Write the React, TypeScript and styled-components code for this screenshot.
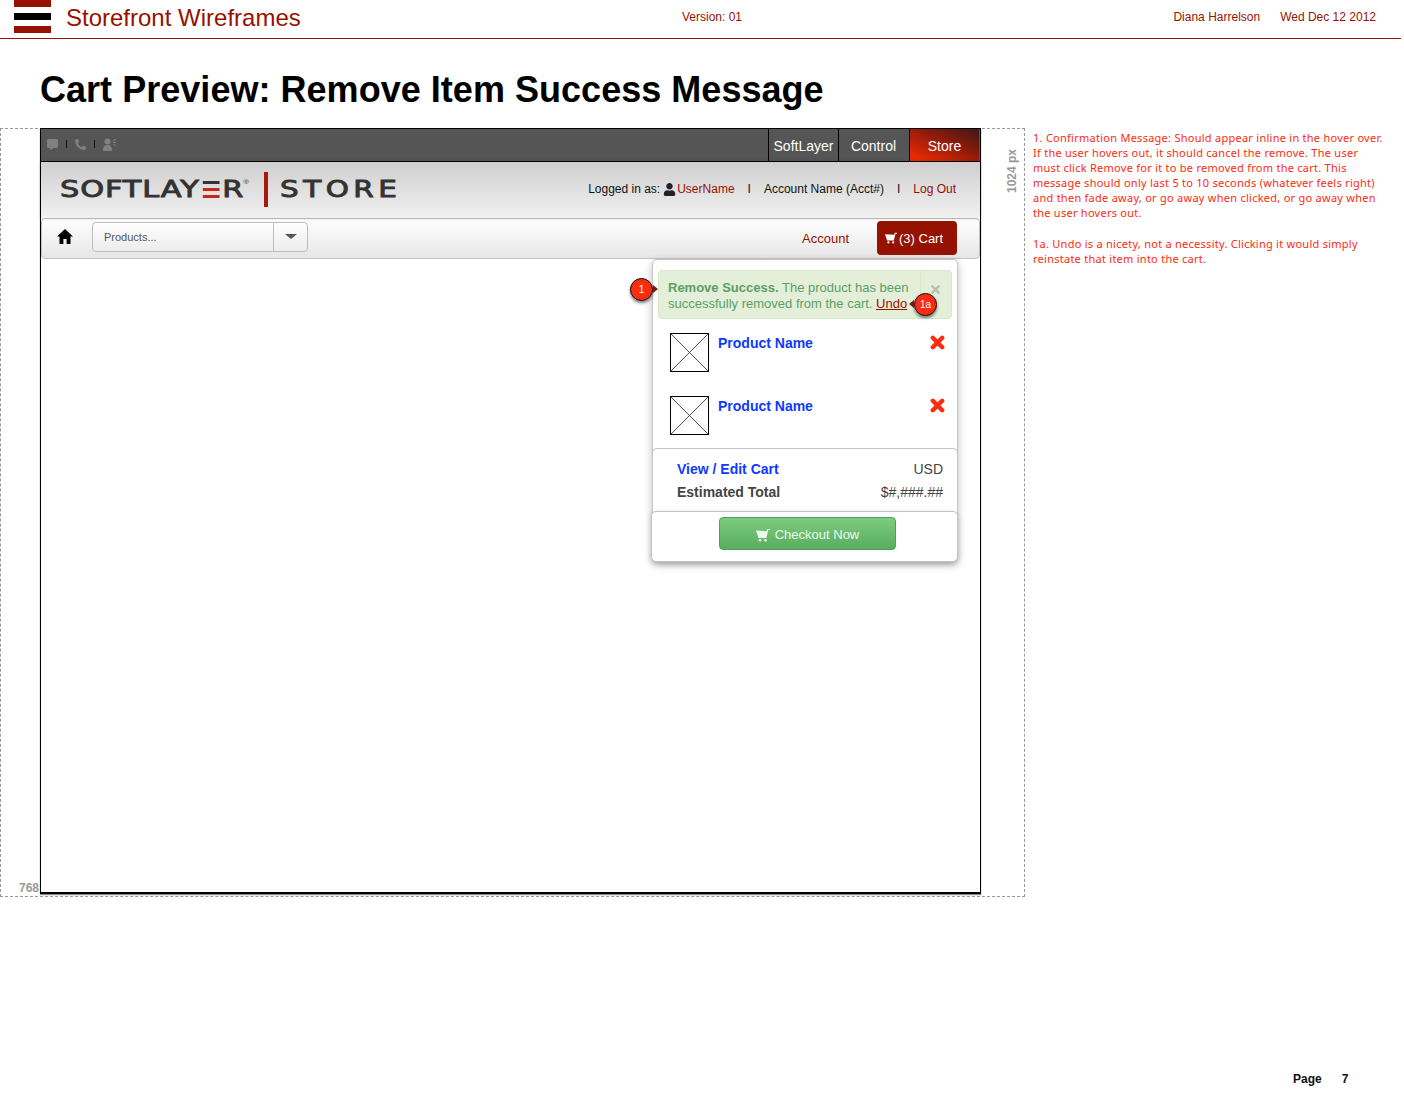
import styled, { createGlobalStyle } from "styled-components";
import { FaCommentAlt, FaPhone, FaTimes, FaUser } from "react-icons/fa";

const red = "#961200";
const blue = "#0f39ff";
const sans = `"Liberation Sans", Arial, sans-serif`;

const GlobalStyle = createGlobalStyle`
  html, body {
    margin: 0;
    padding: 0;
    background: #fff;
    font-family: ${sans};
    color: #000;
  }
  * { box-sizing: border-box; }
`;

const Page = styled.div`
  width: 1404px;
  height: 1093px;
  overflow: hidden;
`;

const SheetHeader = styled.header`
  width: 1401px;
  height: 39px;
  display: flex;
  align-items: flex-start;
  padding-left: 14px;
  border-bottom: 1px solid ${red};
`;

const SheetBrand = styled.div`
  flex: 0 0 668px;
  display: flex;
  align-items: flex-start;
  gap: 15px;
`;

const SheetTitle = styled.div`
  color: ${red};
  font-size: 24px;
  line-height: 36px;
`;

const SheetMeta = styled.div`
  font-size: 12px;
  line-height: 34px;
  color: ${red};
`;

const SheetRight = styled.div`
  margin-left: auto;
  padding-right: 25px;
  display: flex;
  gap: 20px;
`;

const PageTitle = styled.h1`
  margin: 0;
  padding: 28px 0 0 40px;
  height: 89px;
  font-size: 36px;
  line-height: 46px;
  font-weight: 700;
  letter-spacing: 0.03px;
`;

const Board = styled.div`
  display: flex;
  align-items: flex-start;
`;

const Viewport = styled.div`
  position: relative;
  flex: 0 0 1025px;
  height: 769px;
  border: 1px dashed #999;
  padding-left: 39px;
`;

const SizeLabel = styled.div`
  position: absolute;
  font-size: 12px;
  font-weight: 700;
  color: #999;
  white-space: nowrap;
`;

const WidthLabel = styled(SizeLabel)`
  right: 5px;
  top: 20px;
  writing-mode: vertical-rl;
  transform: rotate(180deg);
`;

const HeightLabel = styled(SizeLabel)`
  left: 18px;
  bottom: 1px;
`;

const Screen = styled.div`
  position: relative;
  width: 941px;
  height: 766px;
  margin-top: -1px;
  background: #fff;
  border: 1px solid #000;
  border-bottom-width: 2px;
  box-shadow: 0 1px 1px #888;
`;

const TopBar = styled.div`
  height: 33px;
  display: flex;
  justify-content: space-between;
  background: #555;
  border-bottom: 1px solid #000;
`;

const Utilities = styled.div`
  display: flex;
  align-items: center;
  gap: 8px;
  padding: 0 0 2px 6px;
  color: #808080;
  font-size: 11px;
`;

const UtilDivider = styled.span`
  width: 1px;
  height: 8px;
  background: #111;
`;

const Tabs = styled.div`
  display: flex;
  padding-right: 1px;
`;

const Tab = styled.div<{ $active?: boolean }>`
  width: 70px;
  margin-left: ${(p) => (p.$active ? 1 : 0)}px;
  border-left: 1px solid #000;
  display: flex;
  align-items: center;
  justify-content: center;
  padding-top: 2px;
  color: #fff;
  font-size: 14px;
  background: ${(p) =>
    p.$active ? "linear-gradient(to top right, #e72a06 10%, #8a1a0a 60%, #3d1a18)" : "#555"};
`;

const LogoBar = styled.div`
  position: relative;
  height: 56px;
  display: flex;
  align-items: center;
  justify-content: space-between;
  padding: 0 24px 2px 19px;
  background: linear-gradient(#cfcfcf, #f1f1f1);
  box-shadow: 0 0 4px rgba(0, 0, 0, 0.18);
`;

const Logo = styled.div`
  display: flex;
  align-items: center;
`;

const LogoWord = styled.span<{ $width: number; $scale: number }>`
  flex: 0 0 ${(p) => p.$width}px;
  display: flex;
  align-items: center;
  height: 20px;
  font-family: "DejaVu Sans", sans-serif;
  font-size: 23px;
  color: #333;
  -webkit-text-stroke: 0.9px #333;
  white-space: nowrap;
  transform: scaleX(${(p) => p.$scale});
  transform-origin: left center;
`;

const LogoText = styled.span<{ $spacing: number }>`
  letter-spacing: ${(p) => p.$spacing}px;
`;

const Reg = styled.span`
  align-self: flex-start;
  font-family: ${sans};
  font-size: 6px;
  -webkit-text-stroke: 0;
`;

const LogoDivider = styled.span`
  width: 4px;
  height: 35px;
  margin: 0 12px 0 17px;
  background: #a8180c;
`;

const Session = styled.div`
  display: flex;
  align-items: center;
  font-size: 12px;
  color: #111;
`;

const SessionLink = styled.span`
  color: ${red};
`;

const SessionSep = styled.span`
  margin: 0 13px;
`;

const UserIcon = styled(FaUser)`
  margin: 0 1px 0 3px;
  font-size: 13px;
  color: #222;
`;

const NavBar = styled.div`
  height: 41px;
  display: flex;
  align-items: center;
  padding: 0 22px 2px 15px;
  border: 1px solid #c4c4c4;
  border-radius: 4px;
  background: linear-gradient(#fff, #e6e6e6);
`;

const HomeGlyph = styled.svg`
  width: 16px;
  height: 15px;
  margin-top: -2px;
  flex: none;
`;

const Select = styled.div`
  width: 216px;
  height: 30px;
  margin: -2px 0 0 19px;
  display: flex;
  border: 1px solid #bdbdbd;
  border-radius: 4px;
  background: linear-gradient(#fff, #ececec);
  font-size: 11px;
  color: #555;
`;

const SelectValue = styled.div`
  flex: 1;
  display: flex;
  align-items: center;
  padding-left: 11px;
`;

const SelectArrow = styled.div`
  width: 34px;
  display: flex;
  align-items: center;
  justify-content: center;
  border-left: 1px solid #bdbdbd;
  &::after {
    content: "";
    border: 6px solid transparent;
    border-top: 5px solid #555;
    border-bottom: 0;
  }
`;

const AccountLink = styled.div`
  margin: 2px 0 0 auto;
  font-size: 13px;
  color: ${red};
`;

const CartButton = styled.div`
  width: 80px;
  height: 34px;
  margin-left: 28px;
  padding: 1px 0 0 8px;
  display: flex;
  align-items: center;
  gap: 2px;
  border-radius: 4px;
  background: ${red};
  color: #fff;
  font-size: 13px;
`;

const Popover = styled.div`
  position: absolute;
  left: 611px;
  top: 130px;
  width: 306px;
  height: 303px;
  background: #fff;
  border: 1px solid #c4c4c4;
  border-radius: 5px;
  box-shadow: 0 3px 8px rgba(0, 0, 0, 0.25);
`;

const Alert = styled.div`
  position: relative;
  margin: 10px 5px 0;
  height: 49px;
  padding: 9px 0 0 9px;
  background: #e3efd9;
  border: 1px solid #d8e8cb;
  border-radius: 4px;
  color: #5c9e66;
  font-size: 13px;
  line-height: 16px;
  white-space: nowrap;
`;

const AlertClose = styled.div`
  position: absolute;
  right: 0;
  top: 0;
  bottom: 0;
  width: 31px;
  border-left: 1px solid #d8e8cb;
  display: flex;
  justify-content: center;
  padding: 12px 2px 0 0;
  color: #b9bfb4;
  font-size: 13px;
`;

const Undo = styled.span`
  color: ${red};
  text-decoration: underline;
`;

const Badge = styled.div<{ $side: "left" | "right" }>`
  position: absolute;
  width: 23px;
  height: 23px;
  display: flex;
  align-items: center;
  justify-content: center;
  border: 1px solid #111;
  border-radius: 50%;
  background: #fb2c10;
  color: #fff;
  font-size: 10px;
  box-shadow: 0 2px 3px rgba(0, 0, 0, 0.5);
  &::after {
    content: "";
    position: absolute;
    top: 6px;
    ${(p) => (p.$side === "right" ? "right: -6px;" : "left: -6px;")}
    border: 4px solid transparent;
    ${(p) =>
      p.$side === "right"
        ? "border-left: 5px solid #8c1206; border-right: 0;"
        : "border-right: 5px solid #8c1206; border-left: 0;"}
  }
`;

const AlertBadge = styled(Badge)`
  left: -23px;
  top: 18px;
`;

const UndoBadge = styled(Badge)`
  left: 261px;
  top: 33px;
`;

const Products = styled.div`
  height: 129px;
  padding: 14px 12px 0 17px;
  display: flex;
  flex-direction: column;
  gap: 24px;
`;

const ProductRow = styled.div`
  height: 39px;
  display: flex;
  align-items: flex-start;
  gap: 9px;
`;

const ProductName = styled.div`
  flex: 1;
  font-size: 14px;
  font-weight: 700;
  line-height: 20px;
  color: ${blue};
`;

const RemoveGlyph = styled.svg`
  width: 15px;
  height: 15px;
  margin-top: 2px;
  flex: none;
`;

const Totals = styled.div`
  height: 63px;
  margin: 0 -1px;
  padding: 10px 14px 0 24px;
  border: 1px solid #c4c4c4;
  border-bottom: 0;
  border-radius: 5px 5px 0 0;
  display: flex;
  flex-direction: column;
  gap: 3px;
`;

const TotalRow = styled.div`
  display: flex;
  justify-content: space-between;
  font-size: 14px;
  line-height: 20px;
  color: #444;
`;

const TotalLink = styled.span`
  font-weight: 700;
  color: ${blue};
`;

const TotalLabel = styled.span`
  font-weight: 700;
`;

const Checkout = styled.div`
  height: 51px;
  margin: 0 -1px -1px -2px;
  padding: 5px 0 0 6px;
  border: 1px solid #c4c4c4;
  border-radius: 5px;
  background: #fff;
  display: flex;
  justify-content: center;
  box-shadow: 0 2px 5px rgba(0, 0, 0, 0.2);
`;

const CheckoutButton = styled.div`
  width: 177px;
  height: 33px;
  padding-top: 2px;
  display: flex;
  align-items: center;
  justify-content: center;
  gap: 5px;
  border: 1px solid #539c59;
  border-radius: 4px;
  background: linear-gradient(#7ccc80, #59ad5f);
  color: #eef8ee;
  font-size: 13px;
`;

const Notes = styled.aside`
  margin-left: 8px;
  padding-top: 2px;
  font-family: "Noto Sans", sans-serif;
  font-size: 11px;
  line-height: 15px;
  letter-spacing: 0.26px;
  color: #ff2a0e;
  white-space: nowrap;
`;

const Note = styled.p`
  margin: 0 0 16px;
`;

const PageNumber = styled.footer`
  margin-top: 175px;
  padding-left: 1293px;
  display: flex;
  gap: 20px;
  font-size: 12px;
  font-weight: 700;
  line-height: 14px;
  color: #111;
`;

function CartIcon({ size = 12 }: { size?: number }) {
  return (
    <svg width={size} height={size} viewBox="0 0 14 14" fill="currentColor">
      <path d="M0 2.5 L10.5 3.2 L11.5 1 L14 1 L14 2 L12.2 2 L10.4 10 L2.5 10 Z" />
      <circle cx="4" cy="12.2" r="1.3" />
      <circle cx="9.5" cy="12.2" r="1.3" />
    </svg>
  );
}

function SheetLogo() {
  return (
    <svg width="37" height="33" viewBox="0 0 37 33">
      <rect width="37" height="7" fill={red} />
      <rect y="13" width="37" height="7" fill="#000" />
      <rect y="26" width="37" height="7" fill={red} />
    </svg>
  );
}

function PeopleIcon() {
  return (
    <svg width="14" height="13" viewBox="0 0 14 13" fill="currentColor">
      <circle cx="4.5" cy="3.5" r="3" />
      <path d="M0 13 C0 8 2 7 4.5 7 C7 7 9 8 9 13 Z" />
      <path d="M13 1 L10 3 M13 4.5 L10 4.5 M13 8 L10 6" stroke="currentColor" fill="none" />
    </svg>
  );
}

function LogoBarsE() {
  return (
    <svg width="13" height="17" viewBox="0 0 13 17" style={{ margin: "0 2px" }}>
      <rect width="13" height="3" fill="#333" />
      <rect y="7" width="13" height="3" fill="#c5281c" />
      <rect y="14" width="13" height="3" fill="#c5281c" />
    </svg>
  );
}

function HomeIcon() {
  return (
    <HomeGlyph viewBox="0 0 16 15">
      <path d="M8 0 L16 7.5 L13.5 7.5 L13.5 15 L9.6 15 L9.6 10 L6.4 10 L6.4 15 L2.5 15 L2.5 7.5 L0 7.5 Z" fill="#000" />
    </HomeGlyph>
  );
}

function RemoveIcon() {
  return (
    <RemoveGlyph viewBox="0 0 15 15">
      <path d="M2.8 2.8 L12.2 12.2 M12.2 2.8 L2.8 12.2" stroke="#fb2c10" strokeWidth="4.4" strokeLinecap="round" />
    </RemoveGlyph>
  );
}

function Placeholder() {
  return (
    <svg width="39" height="39" viewBox="0 0 39 39">
      <rect x="0.5" y="0.5" width="38" height="38" fill="#fff" stroke="#000" />
      <path d="M0 0 L39 39 M39 0 L0 39" stroke="#222" strokeWidth="0.8" />
    </svg>
  );
}

export default function App() {
  return (
    <Page>
      <GlobalStyle />
      <SheetHeader>
        <SheetBrand>
          <SheetLogo />
          <SheetTitle>Storefront Wireframes</SheetTitle>
        </SheetBrand>
        <SheetMeta>Version: 01</SheetMeta>
        <SheetRight>
          <SheetMeta>Diana Harrelson</SheetMeta>
          <SheetMeta>Wed Dec 12 2012</SheetMeta>
        </SheetRight>
      </SheetHeader>
      <PageTitle>Cart Preview: Remove Item Success Message</PageTitle>
      <Board>
        <Viewport>
          <WidthLabel>1024 px</WidthLabel>
          <HeightLabel>768</HeightLabel>
          <Screen>
            <TopBar>
              <Utilities>
                <FaCommentAlt />
                <UtilDivider />
                <FaPhone style={{ transform: "scaleX(-1)" }} />
                <UtilDivider />
                <PeopleIcon />
              </Utilities>
              <Tabs>
                <Tab>SoftLayer</Tab>
                <Tab>Control</Tab>
                <Tab $active>Store</Tab>
              </Tabs>
            </TopBar>
            <LogoBar>
              <Logo>
                <LogoWord $width={187} $scale={1.32}>
                  <LogoText $spacing={0.7}>SOFTLAY</LogoText>
                  <LogoBarsE />
                  <LogoText $spacing={0}>R</LogoText>
                  <Reg>®</Reg>
                </LogoWord>
                <LogoDivider />
                <LogoWord $width={118} $scale={1.28}>
                  <LogoText $spacing={3.5}>STORE</LogoText>
                </LogoWord>
              </Logo>
              <Session>
                Logged in as:
                <UserIcon />
                <SessionLink>UserName</SessionLink>
                <SessionSep>I</SessionSep>
                Account Name (Acct#)
                <SessionSep>I</SessionSep>
                <SessionLink>Log Out</SessionLink>
              </Session>
            </LogoBar>
            <NavBar>
              <HomeIcon />
              <Select>
                <SelectValue>Products...</SelectValue>
                <SelectArrow />
              </Select>
              <AccountLink>Account</AccountLink>
              <CartButton>
                <CartIcon />
                (3) Cart
              </CartButton>
            </NavBar>
            <Popover>
              <Alert>
                <b>Remove Success.</b> The product has been
                <br />
                successfully removed from the cart. <Undo>Undo</Undo>
                <AlertClose>
                  <FaTimes />
                </AlertClose>
              </Alert>
              <AlertBadge $side="right">1</AlertBadge>
              <UndoBadge $side="left">1a</UndoBadge>
              <Products>
                <ProductRow>
                  <Placeholder />
                  <ProductName>Product Name</ProductName>
                  <RemoveIcon />
                </ProductRow>
                <ProductRow>
                  <Placeholder />
                  <ProductName>Product Name</ProductName>
                  <RemoveIcon />
                </ProductRow>
              </Products>
              <Totals>
                <TotalRow>
                  <TotalLink>View / Edit Cart</TotalLink>
                  <span>USD</span>
                </TotalRow>
                <TotalRow>
                  <TotalLabel>Estimated Total</TotalLabel>
                  <span>$#,###.##</span>
                </TotalRow>
              </Totals>
              <Checkout>
                <CheckoutButton>
                  <CartIcon size={14} />
                  Checkout Now
                </CheckoutButton>
              </Checkout>
            </Popover>
          </Screen>
        </Viewport>
        <Notes>
          <Note>
            1. Confirmation Message: Should appear inline in the hover over.
            <br />
            If the user hovers out, it should cancel the remove. The user
            <br />
            must click Remove for it to be removed from the cart. This
            <br />
            message should only last 5 to 10 seconds (whatever feels right)
            <br />
            and then fade away, or go away when clicked, or go away when
            <br />
            the user hovers out.
          </Note>
          <Note>
            1a. Undo is a nicety, not a necessity. Clicking it would simply
            <br />
            reinstate that item into the cart.
          </Note>
        </Notes>
      </Board>
      <PageNumber>
        <span>Page</span>
        <span>7</span>
      </PageNumber>
    </Page>
  );
}
